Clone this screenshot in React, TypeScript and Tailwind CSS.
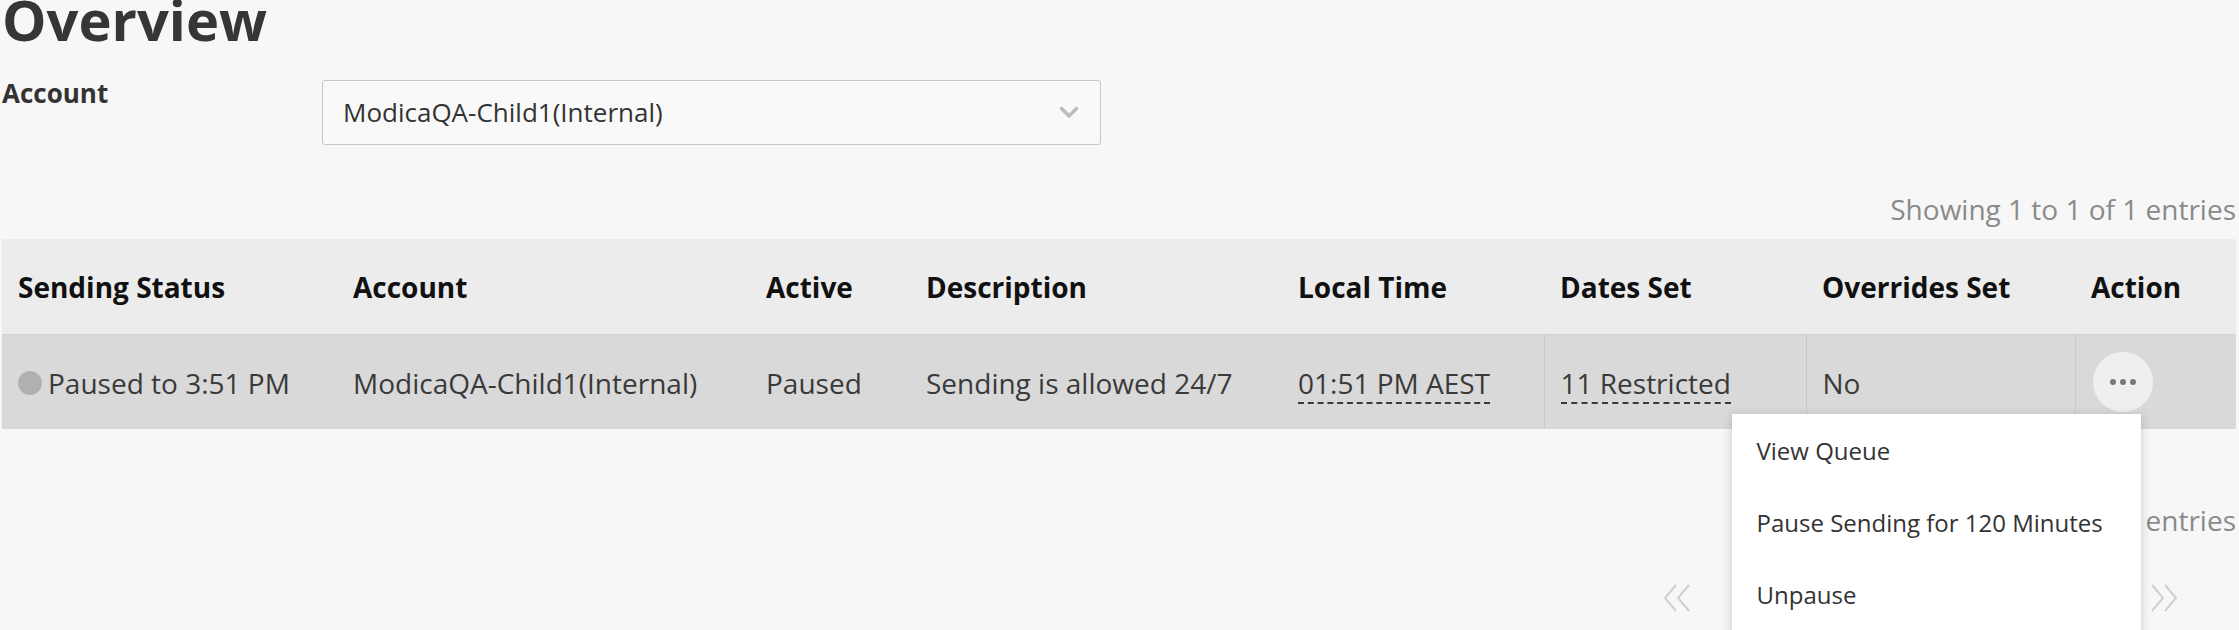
import React from 'react'

interface Column {
  label: string
  width: string
}

const COLUMNS: Column[] = [
  { label: 'Sending Status', width: 'w-[335px]' },
  { label: 'Account', width: 'w-[413px]' },
  { label: 'Active', width: 'w-[160px]' },
  { label: 'Description', width: 'w-[372px]' },
  { label: 'Local Time', width: 'w-[262px]' },
  { label: 'Dates Set', width: 'w-[262px]' },
  { label: 'Overrides Set', width: 'w-[269px]' },
  { label: 'Action', width: 'w-[161px]' },
]

const MENU_ITEMS = ['View Queue', 'Pause Sending for 120 Minutes', 'Unpause']

const ChevronDown = () => (
  <svg width="20" height="13" viewBox="0 0 20 13" fill="none">
    <polyline points="2.5,2.5 10,10 17.5,2.5" stroke="#bcbcbc" strokeWidth="3.5" strokeLinecap="round" strokeLinejoin="round" />
  </svg>
)

const DoubleAngle = ({ dir }: { dir: 'left' | 'right' }) => (
  <svg width="30" height="30" viewBox="0 0 30 30" fill="none">
    {dir === 'left' ? (
      <>
        <polyline points="14,2 3,15 14,28" stroke="#cfcfcf" strokeWidth="2" />
        <polyline points="27,2 16,15 27,28" stroke="#cfcfcf" strokeWidth="2" />
      </>
    ) : (
      <>
        <polyline points="3,2 14,15 3,28" stroke="#cfcfcf" strokeWidth="2" />
        <polyline points="16,2 27,15 16,28" stroke="#cfcfcf" strokeWidth="2" />
      </>
    )}
  </svg>
)

const Dashed = ({ children }: { children: React.ReactNode }) => (
  <span className="inline-block leading-[1.36] border-b-2 border-dashed border-[#3a3a3a]">{children}</span>
)

export default function App() {
  return (
    <div className="min-h-screen w-full overflow-hidden bg-[#f7f7f7] pl-[2px] pr-[3px] font-['Open_Sans',sans-serif] text-[#3a3a3a]">
      <h1 className="text-[56px] leading-[38px] font-bold text-[#363636]">Overview</h1>

      {/* account picker */}
      <div className="mt-[42px] flex items-start">
        <label className="w-[320px] text-[26px] leading-[26px] font-bold text-[#333]">Account</label>
        <div className="flex h-[65px] w-[779px] items-center justify-between rounded-[3px] border border-[#c6c6c6] bg-[#f9f9f9] pl-[20px] pr-[21px]">
          <span className="text-[26px] text-[#333]">ModicaQA-Child1(Internal)</span>
          <ChevronDown />
        </div>
      </div>

      <div className="mt-[45px] text-right text-[28px] leading-[38px] text-[#8a8a8a]">Showing 1 to 1 of 1 entries</div>

      <table className="mt-[11px] w-full table-fixed border-collapse">
        <thead>
          <tr className="bg-[#ececec] border-b border-[#d2d2d2]">
            {COLUMNS.map(col => (
              <th key={col.label} className={`${col.width} h-[95px] pl-[16px] pt-[2px] text-left text-[28px] font-bold text-[#111]`}>
                {col.label}
              </th>
            ))}
          </tr>
        </thead>
        <tbody>
          <tr className="bg-[#d9d9d9] text-[28px] text-[#3a3a3a]">
            <td className="h-[95px] pl-[16px] pt-[2px]">
              <div className="flex items-center gap-[6px]">
                <span className="h-[24px] w-[24px] rounded-full bg-[#b0b0b0]" />
                <span>Paused to 3:51 PM</span>
              </div>
            </td>
            <td className="pl-[16px] pt-[2px]">ModicaQA-Child1(Internal)</td>
            <td className="pl-[16px] pt-[2px]">Paused</td>
            <td className="pl-[16px] pt-[2px]">Sending is allowed 24/7</td>
            <td className="pl-[16px] pt-[2px]">
              <Dashed>01:51 PM AEST</Dashed>
            </td>
            <td className="border-l border-[#c9c9c9] pl-[16px] pt-[2px]">
              <Dashed>11 Restricted</Dashed>
            </td>
            <td className="border-l border-[#c9c9c9] pl-[16px] pt-[2px]">No</td>
            <td className="border-l border-[#c9c9c9] pl-[17px]">
              <div className="relative h-[60px] w-[60px]">
                <button className="flex h-[60px] w-[60px] items-center justify-center gap-[4px] rounded-full bg-[#efefef]">
                  <span className="h-[6px] w-[6px] rounded-full bg-[#777]" />
                  <span className="h-[6px] w-[6px] rounded-full bg-[#777]" />
                  <span className="h-[6px] w-[6px] rounded-full bg-[#777]" />
                </button>
                {/* open action menu */}
                <div className="absolute right-[12px] top-[62px] z-10 w-[409px] bg-white pb-[8px] pt-[1px] shadow-[0_2px_10px_rgba(0,0,0,0.18)]">
                  {MENU_ITEMS.map(item => (
                    <div key={item} className="flex h-[72px] items-center pl-[25px] text-[24px] text-[#333] whitespace-nowrap">
                      {item}
                    </div>
                  ))}
                </div>
              </div>
            </td>
          </tr>
        </tbody>
      </table>

      <div className="mt-[72px] text-right text-[28px] leading-[38px] text-[#8a8a8a]">Showing 1 to 1 of 1 entries</div>

      {/* pager */}
      <div className="mt-[44px] flex justify-end pr-[57px]">
        <div className="flex w-[517px] items-center justify-between">
          <DoubleAngle dir="left" />
          <DoubleAngle dir="right" />
        </div>
      </div>
    </div>
  )
}
